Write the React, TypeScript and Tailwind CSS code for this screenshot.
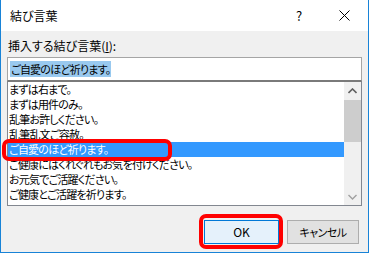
import React from "react";

const items = [
  "まずは右まで。",
  "まずは用件のみ。",
  "乱筆お許しください。",
  "乱筆乱文ご容赦。",
  "ご自愛のほど祈ります。",
  "ご健康にはくれぐれもお気を付けください。",
  "お元気でご活躍ください。",
  "ご健康とご活躍を祈ります。",
];

const font = "[font-family:'Noto_Sans_CJK_JP','Noto_Sans',sans-serif] [font-feature-settings:'palt']";

export default function App() {
  return (
    <div className={`relative w-[369px] h-[253px] bg-[#f0f0f0] border-x border-b border-[#1883d7] flex flex-col text-black ${font}`}>
      {/* title bar */}
      <div className="h-[31px] bg-white flex items-center shrink-0">
        <div className="pl-[9px] text-[12px] leading-none flex-1">結び言葉</div>
        <div className="w-[20px] text-[13px] leading-none text-center mr-[13px]">?</div>
        <div className="w-[45px] h-[31px] flex items-center justify-center mr-[1px]">
          <svg width="11" height="11" viewBox="0 0 11 11">
            <path d="M0.5 0.5 L10.5 10.5 M10.5 0.5 L0.5 10.5" stroke="#000" strokeWidth="1" />
          </svg>
        </div>
      </div>
      {/* body */}
      <div className="flex-1 flex flex-col px-[6px]">
        <div className="mt-[7px] h-[16px] text-[12px] leading-[16px] pl-[1px]">
          挿入する結び言葉(<span className="underline">I</span>):
        </div>
        <div className="mt-[3px] h-[24px] w-[355px] bg-white border border-[#a5a5a5] border-b-[#7a7a7a] flex items-center pl-[2px]">
          <span className="bg-[#99c9ef] text-[11px] tracking-[-0.8px] leading-[16px] px-[1px]">ご自愛のほど祈ります。</span>
        </div>
        <div className="h-[125px] w-[355px] bg-white border border-[#828790] border-t-[#7a7a7a] flex">
          <div className="flex-1 overflow-hidden">
            {items.map((t, i) => (
              <div
                key={t}
                className={`h-[15px] text-[11px] tracking-[-0.8px] leading-[15px] pl-[1px] whitespace-nowrap ${i === 4 ? "bg-[#3399ff] text-white" : ""}`}
              >
                {t}
              </div>
            ))}
          </div>
          <div className="w-[17px] bg-[#f0f0f0] flex flex-col items-center">
            <div className="h-[17px] w-full flex items-center justify-center">
              <svg width="9" height="6" viewBox="0 0 9 6">
                <path d="M0.5 5 L4.5 1 L8.5 5" stroke="#606060" strokeWidth="1.6" fill="none" />
              </svg>
            </div>
            <div className="w-full h-[42px] bg-[#cdcdcd] mt-[1px]" />
            <div className="flex-1" />
            <div className="h-[17px] w-full flex items-center justify-center">
              <svg width="9" height="6" viewBox="0 0 9 6">
                <path d="M0.5 1 L4.5 5 L8.5 1" stroke="#a0a0a0" strokeWidth="1.4" fill="none" />
              </svg>
            </div>
          </div>
        </div>
        <div className="flex justify-end gap-[8px] mt-[14px] pr-[3px]">
          <button className="w-[75px] h-[24px] bg-[#e5f1fb] border border-[#0078d7] text-[12px] leading-none">OK</button>
          <button className="w-[72px] h-[24px] bg-[#e1e1e1] border border-[#adadad] text-[11px] tracking-[-0.5px] leading-none">キャンセル</button>
        </div>
      </div>
      {/* red annotations */}
      <div className="absolute left-[1px] top-[139px] w-[170px] h-[22px] border-[4px] border-[#ff0000] rounded-[7px]" />
      <div className="absolute left-[198px] top-[214px] w-[84px] h-[35px] border-[4px] border-[#ff0000] rounded-[7px]" />
    </div>
  );
}
